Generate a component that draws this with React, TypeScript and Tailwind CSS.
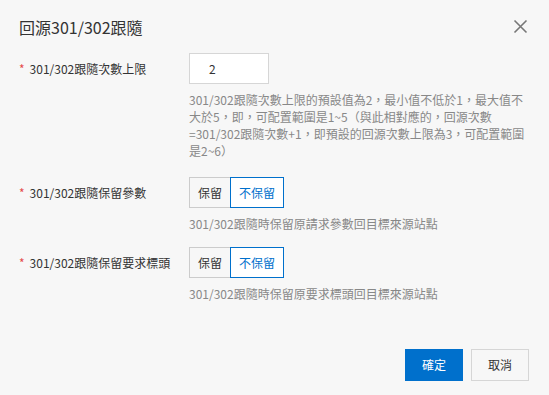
const font = { fontFamily: '"Noto Sans CJK TC", "Noto Sans", sans-serif' };

function Toggle() {
  return (
    <div className="flex h-[31px] text-[12px]">
      <button className="w-[41px] h-full border border-[#cccccc] border-r-0 bg-[#f7f7f7] text-[#333333]">
        保留
      </button>
      <button className="w-[54px] h-full border border-[#0070cc] bg-white text-[#0070cc]">
        不保留
      </button>
    </div>
  );
}

function Label({ text }: { text: string }) {
  return (
    <div className="w-[170px] shrink-0 h-[31px] flex items-center text-[12px] text-[#333333]">
      <span className="text-[#e54b4b] mr-[5px]">*</span>
      {text}
    </div>
  );
}

export default function App() {
  return (
    <div className="w-[549px] h-[395px] bg-[#f7f7f7] flex flex-col" style={font}>
      <div className="h-[53px] flex items-center justify-between pl-[19px] pr-[20px]">
        <span className="text-[16px] text-[#333333]">回源301/302跟隨</span>
        <svg width="15" height="15" viewBox="0 0 15 15" className="mr-[1px]">
          <path d="M1.5 1.5 L13.5 13.5 M13.5 1.5 L1.5 13.5" stroke="#777777" strokeWidth="1.6" />
        </svg>
      </div>

      <div className="pl-[19px] pr-[20px] flex flex-col">
        <div className="flex">
          <Label text="301/302跟隨次數上限" />
          <div className="flex flex-col">
            <div className="w-[80px] h-[31px] border border-[#d6d6d6] bg-white flex items-center pl-[19px] text-[12px] text-[#333333]">
              2
            </div>
            <p className="mt-[7px] text-[12px] leading-[17px] text-[#888888]">
              301/302跟隨次數上限的預設值為2，最小值不低於1，最大值不
              <br />
              大於5，即，可配置範圍是1~5（與此相對應的，回源次數
              <br />
              =301/302跟隨次數+1，即預設的回源次數上限為3，可配置範圍
              <br />
              是2~6）
            </p>
          </div>
        </div>

        <div className="flex mt-[18px]">
          <Label text="301/302跟隨保留參數" />
          <div className="flex flex-col">
            <Toggle />
            <p className="mt-[7px] text-[12px] leading-[17px] text-[#888888]">
              301/302跟隨時保留原請求參數回目標來源站點
            </p>
          </div>
        </div>

        <div className="flex mt-[15px]">
          <Label text="301/302跟隨保留要求標頭" />
          <div className="flex flex-col">
            <Toggle />
            <p className="mt-[7px] text-[12px] leading-[17px] text-[#888888]">
              301/302跟隨時保留原要求標頭回目標來源站點
            </p>
          </div>
        </div>
      </div>

      <div className="mt-auto mb-[14px] flex justify-end gap-[8px] pr-[20px]">
        <button className="w-[58px] h-[32px] bg-[#0070cc] text-white text-[12px]">確定</button>
        <button className="w-[58px] h-[32px] border border-[#d6d6d6] bg-[#f7f7f7] text-[#333333] text-[12px]">
          取消
        </button>
      </div>
    </div>
  );
}
